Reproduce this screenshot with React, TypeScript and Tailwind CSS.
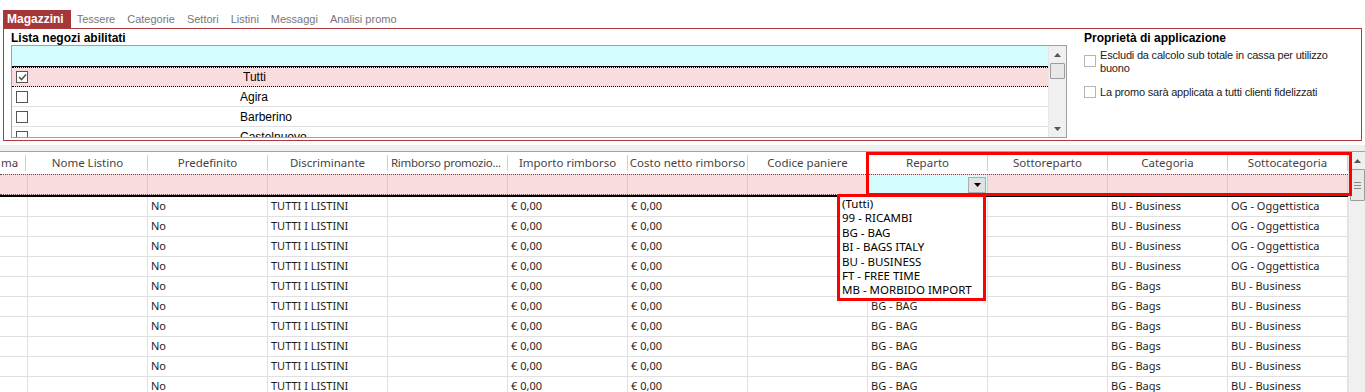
import React from "react";

type Row = {
    predefinito: string;
    discriminante: string;
    importo: string;
    costo: string;
    reparto: string;
    categoria: string;
    sottocategoria: string;
};

const tabs = ["Tessere", "Categorie", "Settori", "Listini", "Messaggi", "Analisi promo"];

const negozi = ["Agira", "Barberino", "Castelnuovo"];

const headers = [
    "Nome Listino",
    "Predefinito",
    "Discriminante",
    "Rimborso promozio...",
    "Importo rimborso",
    "Costo netto rimborso",
    "Codice paniere",
    "Reparto",
    "Sottoreparto",
    "Categoria",
    "Sottocategoria",
];

const reparti = [
    "(Tutti)",
    "99 - RICAMBI",
    "BG - BAG",
    "BI - BAGS ITALY",
    "BU - BUSINESS",
    "FT - FREE TIME",
    "MB - MORBIDO IMPORT",
];

// rows under the open dropdown keep their reparto empty
const rows: Row[] = Array.from({ length: 10 }, (_, i) => ({
    predefinito: "No",
    discriminante: "TUTTI I LISTINI",
    importo: "€ 0,00",
    costo: "€ 0,00",
    reparto: i < 5 ? "" : "BG - BAG",
    categoria: i < 4 ? "BU - Business" : "BG - Bags",
    sottocategoria: i < 4 ? "OG - Oggettistica" : "BU - Business",
}));

const ui = "font-['Liberation_Sans',Arial,sans-serif]";
const grid = "font-['Noto_Sans','Open_Sans',sans-serif]";

function Checkbox({ checked, light }: { checked?: boolean; light?: boolean }) {
    return (
        <span
            className={`flex items-center justify-center w-[12px] h-[12px] bg-white border ${
                light ? "border-[#b5b5b5]" : "border-[#555]"
            }`}
        >
            {checked && (
                <svg width="9" height="8" viewBox="0 0 9 8">
                    <path d="M1 4 L3.5 6.5 L8 1.5" stroke="#555" strokeWidth="1.6" fill="none" />
                </svg>
            )}
        </span>
    );
}

function Arrow({ up, color = "#555" }: { up?: boolean; color?: string }) {
    return (
        <svg width="7" height="4" viewBox="0 0 7 4">
            <path d={up ? "M0 4 L3.5 0 L7 4 Z" : "M0 0 L7 0 L3.5 4 Z"} fill={color} />
        </svg>
    );
}

function Cell({ children, w = "w-[120px]" }: { children?: React.ReactNode; w?: string }) {
    return (
        <div className={`${w} shrink-0 h-full border-r border-[#e0e0e0] pl-[3px] flex items-center whitespace-nowrap overflow-hidden`}>
            {children}
        </div>
    );
}

export default function App() {
    return (
        <div className="w-[1365px] h-[392px] overflow-hidden bg-white relative">
            {/* Tabs */}
            <div className={`flex items-end h-[28px] pl-[3px] ${ui} text-[11px]`}>
                <div className="h-[18px] pl-[4px] pr-[7px] bg-[#a5373a] text-white text-[12px] font-bold flex items-center">
                    Magazzini
                </div>
                {tabs.map((t) => (
                    <div key={t} className="h-[18px] px-[6px] text-[#777] flex items-center">
                        {t}
                    </div>
                ))}
            </div>

            {/* Panel */}
            <div className={`mx-[3px] h-[113px] border border-[#b03a3a] flex ${ui}`}>
                <div className="w-[1063px] pl-[7px] pt-[3px] shrink-0">
                    <div className="font-bold text-[12px] leading-[13px] text-black">Lista negozi abilitati</div>
                    <div className="w-[1056px] h-[93px] border border-[#a0a0a0] flex overflow-hidden">
                        <div className="flex-1 flex flex-col">
                            <div className="h-[21px] shrink-0 bg-[#d4fbfd] border-b border-black" />
                            <div className="h-[20px] shrink-0 bg-[#f9dcdd] border-y border-dotted border-black flex items-center">
                                <div className="w-[228px] pl-[4px]">
                                    <Checkbox checked />
                                </div>
                                <span className="text-[12px] pl-[3px]">Tutti</span>
                            </div>
                            {negozi.map((n) => (
                                <div key={n} className="h-[20px] shrink-0 border-b border-[#e0e0e0] flex items-center">
                                    <div className="w-[228px] pl-[4px]">
                                        <Checkbox />
                                    </div>
                                    <span className="text-[12px]">{n}</span>
                                </div>
                            ))}
                        </div>
                        <div className="w-[18px] shrink-0 bg-[#f0f0f0] border-l border-[#e6e6e6] flex flex-col items-center">
                            <div className="h-[17px] flex items-center">
                                <Arrow up />
                            </div>
                            <div className="w-[15px] h-[16px] bg-[#e8e8e8] border border-[#9c9c9c] rounded-[1px]" />
                            <div className="flex-1" />
                            <div className="h-[17px] flex items-center">
                                <Arrow />
                            </div>
                        </div>
                    </div>
                </div>
                <div className="pl-[17px] pt-[3px] text-[11px]">
                    <div className="font-bold text-[12px] leading-[13px] text-black">Proprietà di applicazione</div>
                    <div className="flex items-start gap-[4px] mt-[4px]">
                        <div className="pt-[6px]">
                            <Checkbox light />
                        </div>
                        <div className="leading-[13px] tracking-[-0.2px] text-[#222]">
                            Escludi da calcolo sub totale in cassa per utilizzo
                            <br />
                            buono
                        </div>
                    </div>
                    <div className="flex items-center gap-[4px] mt-[9px]">
                        <Checkbox light />
                        <div className="tracking-[-0.2px] text-[#222]">La promo sarà applicata a tutti clienti fidelizzati</div>
                    </div>
                </div>
            </div>

            {/* Gap band */}
            <div className="h-[4px]" />
            <div className="h-[6px] bg-[#efefef]" />

            {/* Grid */}
            <div className={`border-t border-[#a0a0a0] flex ${grid} text-[11px]`}>
                <div className="w-[1348px] shrink-0">
                    {/* Header */}
                    <div className="h-[22px] flex text-[#444] text-[11.5px]">
                        <div className="w-[28px] shrink-0 h-full flex items-center">
                            <span className="pr-[7px] pl-[1px] border-r border-[#d0d0d0] h-[16px] leading-[16px]">ma</span>
                        </div>
                        {headers.map((h, i) => (
                            <div key={h} className="w-[120px] shrink-0 h-full flex items-center">
                                <span
                                    className={`flex-1 h-[16px] leading-[16px] border-r border-[#d0d0d0] whitespace-nowrap overflow-hidden ${
                                        i === 3 ? "text-left pl-[3px] tracking-[-0.3px]" : "text-center"
                                    }`}
                                >
                                    {h}
                                </span>
                            </div>
                        ))}
                    </div>
                    {/* Filter row */}
                    <div className="h-[21px] bg-[#f9dcdd] border-y border-dotted border-[#555] flex">
                        <div className="w-[28px] shrink-0 h-full border-r border-[#e4c8c8]" />
                        {headers.map((h, i) => (
                            <div key={h} className="w-[120px] shrink-0 h-full border-r border-[#e4c8c8] flex items-center">
                                {i === 7 && (
                                    <div className="w-full h-full bg-[#d4fbfd] flex items-center justify-end pr-[1px]">
                                        <div className="w-[18px] h-[16px] bg-[#e1e1e1] border border-[#adadad] flex items-center justify-center">
                                            <Arrow color="#000" />
                                        </div>
                                    </div>
                                )}
                            </div>
                        ))}
                    </div>
                    <div className="h-[2px] bg-black" />
                    {/* Data rows */}
                    {rows.map((r, i) => (
                        <div key={i} className="h-[20px] flex border-b border-[#e0e0e0] text-[#1e1e1e]">
                            <Cell w="w-[28px]" />
                            <Cell />
                            <Cell>{r.predefinito}</Cell>
                            <Cell>{r.discriminante}</Cell>
                            <Cell />
                            <Cell>{r.importo}</Cell>
                            <Cell>{r.costo}</Cell>
                            <Cell />
                            <Cell>{r.reparto}</Cell>
                            <Cell />
                            <Cell>{r.categoria}</Cell>
                            <Cell>{r.sottocategoria}</Cell>
                        </div>
                    ))}
                </div>
                {/* Vertical scrollbar */}
                <div className="w-[17px] h-[240px] bg-[#f0f0f0] border-l border-[#e6e6e6] flex flex-col items-center">
                    <div className="h-[17px] flex items-center">
                        <Arrow up />
                    </div>
                    <div className="w-[15px] h-[32px] bg-[#e8e8e8] border border-[#9c9c9c] rounded-[1px] flex flex-col items-center justify-center gap-[2px]">
                        <div className="w-[7px] h-px bg-[#888]" />
                        <div className="w-[7px] h-px bg-[#888]" />
                        <div className="w-[7px] h-px bg-[#888]" />
                    </div>
                </div>
            </div>

            {/* Highlight rectangle around filter columns */}
            <div className="absolute left-[866px] top-[152px] w-[486px] h-[44px] border-[3px] border-[#ff0000] pointer-events-none" />

            {/* Reparto dropdown list */}
            <div className={`absolute left-[837px] top-[194px] w-[149px] h-[107px] bg-white border-[3px] border-[#ff0000] pl-[2px] ${grid} text-[11.5px] text-black`}>
                {reparti.map((r) => (
                    <div key={r} className="h-[14.4px] leading-[14.4px] whitespace-nowrap">
                        {r}
                    </div>
                ))}
            </div>
        </div>
    );
}
